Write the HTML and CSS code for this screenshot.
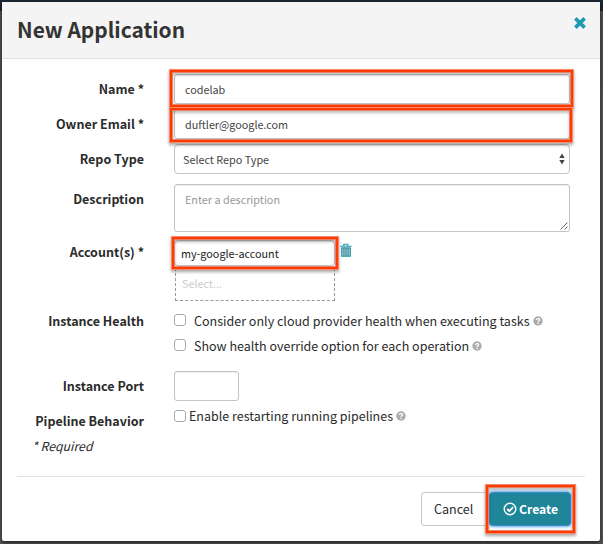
FILE: index.html
```html
<!DOCTYPE html>
<html lang="en">
<head>
<meta charset="utf-8">
<title>New Application</title>
<link rel="stylesheet" href="styles.css">
</head>
<body>
<svg class="defs" width="0" height="0">
  <symbol id="help" viewBox="0 0 10 10"><circle cx="5" cy="5" r="4.7" fill="#acacac"/><path d="M3.4 3.9C3.5 2.1 6.6 2.1 6.6 3.8 6.6 4.9 5.1 4.7 5.1 6" fill="none" stroke="#fff" stroke-width="1.3"/><path d="M4.4 6.7h1.4v1.3H4.4z" fill="#fff"/></symbol>
</svg>
<div class="page">
  <div class="modal">
    <header class="header">
      <h3 class="title">New Application</h3>
      <svg class="close" width="12" height="12" viewBox="0 0 12 12"><path d="M2.7 2.7l6.6 6.6M9.3 2.7l-6.6 6.6" stroke="#1d9ab1" stroke-width="3.7" stroke-linecap="square"/></svg>
    </header>
    <form class="form">
      <div class="row name-row">
        <label class="label">Name *</label>
        <div class="field input marked mark-name">codelab</div>
      </div>
      <div class="row email-row">
        <label class="label">Owner Email *</label>
        <div class="field input marked mark-email">duftler@google.com</div>
      </div>
      <div class="row repo-row">
        <label class="label">Repo Type</label>
        <div class="field select">Select Repo Type
          <svg width="6" height="12" viewBox="0 0 6 12"><path d="M.3 5L3 .5 5.7 5zM.3 7L3 11.5 5.7 7z" fill="#444"/></svg>
        </div>
      </div>
      <div class="row desc-row">
        <label class="label">Description</label>
        <div class="field textarea">Enter a description
          <svg width="8" height="8" viewBox="0 0 8 8"><path d="M.5 7.5l7-7M4.5 7.5l3-3" stroke="#555" stroke-width=".9"/></svg>
        </div>
      </div>
      <div class="row account-row">
        <label class="label">Account(s) *</label>
        <div class="accounts">
          <div class="account-line">
            <div class="field account marked mark-account">my-google-account</div>
            <svg class="trash" width="12" height="14" viewBox="0 0 12 14"><path d="M1.5 4h9v9.5h-9z" fill="#c5c1c0"/><path d="M.2 3.2h11.4M3.8 3V1.2h4V3M1 5h10M1.7 5v8.2h8.6V5M3.9 5v8M6 5v8M8.1 5v8" fill="none" stroke="#1d9ab1" stroke-width="1.1"/></svg>
          </div>
          <div class="placeholder">Select...</div>
        </div>
      </div>
      <div class="row health-row">
        <label class="label">Instance Health</label>
        <div class="checks">
          <div class="check wide"><i class="box"></i><span>Consider only cloud provider health when executing tasks</span><svg class="help"><use href="#help"/></svg></div>
          <div class="check wide"><i class="box"></i><span>Show health override option for each operation</span><svg class="help"><use href="#help"/></svg></div>
        </div>
      </div>
      <div class="row port-row">
        <label class="label">Instance Port</label>
        <div class="field port"></div>
      </div>
      <div class="row pipeline-row">
        <label class="label">Pipeline Behavior</label>
        <div class="check"><i class="box"></i><span>Enable restarting running pipelines</span><svg class="help"><use href="#help"/></svg></div>
      </div>
      <p class="required">* Required</p>
    </form>
    <footer class="footer">
      <div class="button cancel">Cancel</div>
      <div class="button create marked mark-create">
        <svg width="14" height="14" viewBox="0 0 14 14"><circle cx="7" cy="7" r="5.8" fill="none" stroke="#fff" stroke-width="1.4"/><path d="M4.2 7l2.1 2.1 3.8-3.9" fill="none" stroke="#fff" stroke-width="1.8"/></svg><span>Create</span>
      </div>
    </footer>
  </div>
</div>
</body>
</html>
```
FILE: styles.css
```css
* { box-sizing: border-box; }
body { margin: 0; background: #fff; color: #2b2b2b; font: 12.5px/20px "Noto Sans CJK SC", "Noto Sans", sans-serif; }
svg { display: block; flex: none; }
.defs { position: absolute; }
.page { width: 603px; height: 544px; padding: 2px 3px 3px 2px; background: linear-gradient(#1b2733 0 11px, #4c5355 11px 90px, #555 90px); overflow: hidden; }
.modal { width: 598px; height: 539px; background: #fff; border-radius: 0 0 2px 2px; box-shadow: 0 2px 4px rgba(0,0,0,.6); display: flex; flex-direction: column; }
.header { height: 57px; flex: none; background: #f4f4f4; border-bottom: 1px solid #e2e2e2; display: flex; justify-content: space-between; padding: 12px 14px 0 15px; }
.title { margin: 0; font-size: 20.9px; line-height: 30px; font-weight: 700; color: #333; white-space: nowrap; }
.close { margin-top: 3px; }
.form { height: 417px; padding-top: 15px; flex: none; }
.row { display: grid; grid-template-columns: 142px 396px; column-gap: 30px; white-space: nowrap; }
.label { text-align: right; font-weight: 700; line-height: 20px; padding-top: 5px; }
.name-row, .email-row { height: 35px; }
.repo-row { height: 40px; }
.desc-row { height: 56px; }
.account-row { height: 74px; }
.health-row { height: 57px; }
.port-row { height: 35px; }
.field { height: 30px; border: 1px solid #c4c4c4; border-radius: 3px; background: #fff; box-shadow: inset 0 1px 1px rgba(0,0,0,.07); font-size: 10.8px; line-height: 28px; color: #444; }
.input { padding-left: 10px; }
.select { display: flex; align-items: center; justify-content: space-between; padding: 0 4px 1px 8px; border-radius: 4px; line-height: 26px; }
.textarea { height: 48px; line-height: 20px; padding: 4px 10px 5px; color: #999; display: flex; justify-content: space-between; }
.textarea svg { align-self: flex-end; margin: 0 -9px -4px 0; }
.account-row .label { padding-top: 2px; }
.account-line { display: flex; gap: 5px; height: 28px; }
.account { width: 161px; height: 26px; line-height: 24px; padding-left: 6px; color: #222; border-radius: 4px; }
.trash { margin-top: 3px; }
.placeholder { width: 160px; height: 33px; margin-left: 1px; border: 1px dashed #999; color: #ccc; font-size: 10.8px; line-height: 29px; padding-left: 6px; }
.health-row .label { line-height: 14px; padding-top: 0; }
.check { display: flex; align-items: center; height: 12px; gap: 3px; margin-bottom: 13px; }
.check span { position: relative; top: 1px; }
.box { width: 12px; height: 12px; border: 1px solid #aaa; border-radius: 3px; background: #fff; flex: none; }
.wide .box { margin-right: 5px; }
.wide span { font-size: 12.53px; }
.help { width: 10px; height: 10px; position: relative; top: 1px; }
.port { width: 65px; }
.pipeline-row { height: 30px; align-items: start; padding-top: 4px; }
.pipeline-row .label { padding-top: 1px; }
.pipeline-row span, .pipeline-row .help { top: 0; }
.required { margin: 0 0 0 30px; font-style: italic; line-height: 20px; font-size: 12.3px; }
.footer { margin: 0 15px; border-top: 1px solid #e2e2e2; height: 64px; padding: 15px 14px 0 0; display: flex; justify-content: flex-end; }
.button { height: 34px; display: flex; align-items: center; border-radius: 4px; white-space: nowrap; }
.cancel { width: 68px; border: 1px solid #c8c8c8; padding-left: 12px; border-right: 0; border-radius: 4px 0 0 4px; }
.create { width: 82px; background: #1f8598; border: 1px solid #328bd2; color: #fff; font-weight: 700; font-size: 12.2px; gap: 2px; padding-left: 13px; box-shadow: 0 0 3px 1px #68a9e8; }
.marked { position: relative; }
.marked::after { content: ""; position: absolute; border: 2px solid #ff3b00; box-shadow: 0 0 0 1px #f58b70, inset 0 0 0 1px #e78368, 0 2px 3px 1px rgba(0,0,0,.35), inset 0 2px 3px 1px rgba(0,0,0,.25); }
.mark-name::after { inset: -5px -4px -4px -5px; }
.mark-email::after { inset: -2px -3px -4px -5px; }
.mark-account::after { inset: -4px -4px -4px -3px; }
.mark-create::after { inset: -8px -5px -8px -4px; }
```
